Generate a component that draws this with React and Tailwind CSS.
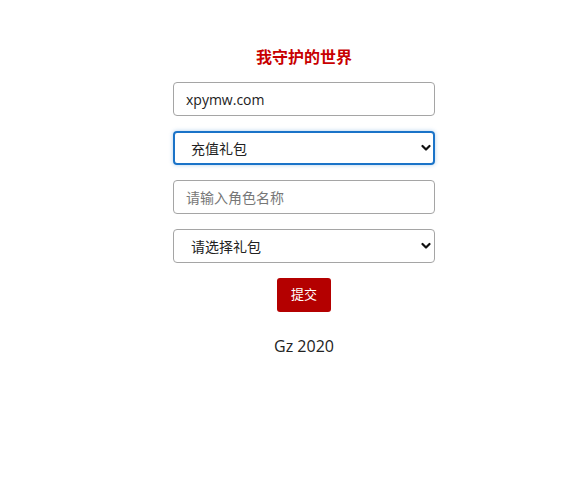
import React from "react";

const Chevron = () => (
  <svg className="pointer-events-none absolute right-[4px] top-1/2 -translate-y-1/2" width="10" height="8" viewBox="0 0 10 8">
    <path d="M1.5 2 L5 5.5 L8.5 2" fill="none" stroke="#111" strokeWidth="2.2" strokeLinecap="round" strokeLinejoin="round" />
  </svg>
);

export default function App() {
  const font = { fontFamily: '"Open Sans", "Noto Sans CJK SC", sans-serif' };
  return (
    <div className="w-[580px] h-[479px] bg-white" style={font}>
      <div className="flex flex-col items-center pt-[44px] pl-[28px]">
        <h1 className="text-[16px] font-bold text-[#c80000] leading-[24px]" style={{ fontFamily: '"Noto Sans CJK SC", sans-serif' }}>我守护的世界</h1>
        <div className="mt-[14px] flex flex-col gap-[15px] w-[262px]">
          <input
            readOnly
            value="xpymw.com"
            className="h-[34px] w-full rounded-[4px] border border-[#a5a5a5] px-[12px] text-[14px] text-[#222] outline-none"
          />
          <div className="relative">
            <div className="h-[34px] w-full rounded-[4px] border-2 border-[#1a73c8] shadow-[0_0_4px_rgba(26,115,200,0.35)] pl-[16px] flex items-center text-[14px] text-[#222]">充值礼包</div>
            <Chevron />
          </div>
          <div className="h-[34px] w-full rounded-[4px] border border-[#a5a5a5] px-[12px] flex items-center text-[14px] text-[#777]">请输入角色名称</div>
          <div className="relative">
            <div className="h-[34px] w-full rounded-[4px] border border-[#a5a5a5] pl-[17px] flex items-center text-[14px] text-[#222]">请选择礼包</div>
            <Chevron />
          </div>
        </div>
        <button className="mt-[15px] h-[34px] w-[54px] rounded-[3px] bg-[#b40000] text-white text-[13px]">提交</button>
        <div className="mt-[22px] text-[16px] text-[#222] leading-[24px]">Gz 2020</div>
      </div>
    </div>
  );
}
